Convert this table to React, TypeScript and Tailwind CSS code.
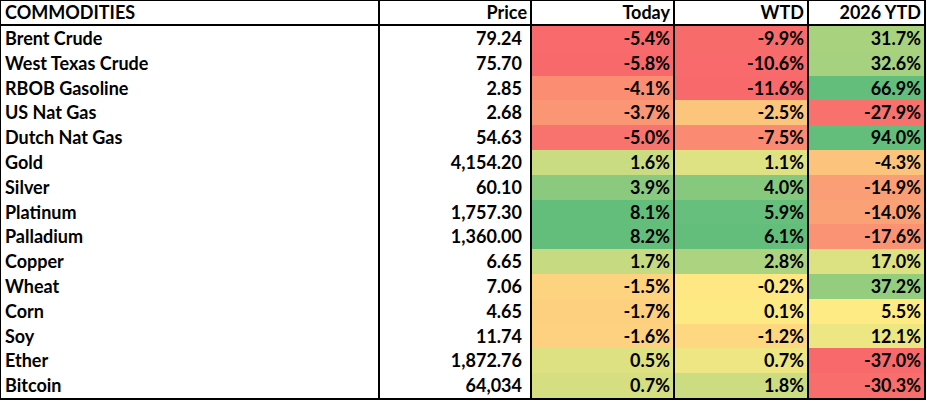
type Row = {
  name: string
  price: string
  today: [string, string]
  wtd: [string, string]
  ytd: [string, string]
}

const rows: Row[] = [
  { name: 'Brent Crude', price: '79.24', today: ['-5.4%', '#F86A6B'], wtd: ['-9.9%', '#F86B6B'], ytd: ['31.7%', '#A9D27F'] },
  { name: 'West Texas Crude', price: '75.70', today: ['-5.8%', '#F8696B'], wtd: ['-10.6%', '#F86A6B'], ytd: ['32.6%', '#A6D17F'] },
  { name: 'RBOB Gasoline', price: '2.85', today: ['-4.1%', '#FA8D72'], wtd: ['-11.6%', '#F8696B'], ytd: ['66.9%', '#63BE7B'] },
  { name: 'US Nat Gas', price: '2.68', today: ['-3.7%', '#FA9673'], wtd: ['-2.5%', '#FCC57C'], ytd: ['-27.9%', '#F8716C'] },
  { name: 'Dutch Nat Gas', price: '54.63', today: ['-5.0%', '#F8736D'], wtd: ['-7.5%', '#FA8A71'], ytd: ['94.0%', '#63BE7B'] },
  { name: 'Gold', price: '4,154.20', today: ['1.6%', '#CADC81'], wtd: ['1.1%', '#DFE283'], ytd: ['-4.3%', '#FCC37C'] },
  { name: 'Silver', price: '60.10', today: ['3.9%', '#8BC97E'], wtd: ['4.0%', '#86C87D'], ytd: ['-14.9%', '#FA9E75'] },
  { name: 'Platinum', price: '1,757.30', today: ['8.1%', '#63BE7B'], wtd: ['5.9%', '#66BF7C'], ytd: ['-14.0%', '#FAA276'] },
  { name: 'Palladium', price: '1,360.00', today: ['8.2%', '#63BE7B'], wtd: ['6.1%', '#63BE7B'], ytd: ['-17.6%', '#FA9373'] },
  { name: 'Copper', price: '6.65', today: ['1.7%', '#C6DB81'], wtd: ['2.8%', '#ACD380'], ytd: ['17.0%', '#DCE182'] },
  { name: 'Wheat', price: '7.06', today: ['-1.5%', '#FDD37F'], wtd: ['-0.2%', '#FFE884'], ytd: ['37.2%', '#95CD7E'] },
  { name: 'Corn', price: '4.65', today: ['-1.7%', '#FDD07F'], wtd: ['0.1%', '#FEEA83'], ytd: ['5.5%', '#FFEB84'] },
  { name: 'Soy', price: '11.74', today: ['-1.6%', '#FDD17F'], wtd: ['-1.2%', '#FDD880'], ytd: ['12.1%', '#ECE683'] },
  { name: 'Ether', price: '1,872.76', today: ['0.5%', '#DEE182'], wtd: ['0.7%', '#EDE683'], ytd: ['-37.0%', '#F8696B'] },
  { name: 'Bitcoin', price: '64,034', today: ['0.7%', '#D5DF82'], wtd: ['1.8%', '#CCDC81'], ytd: ['-30.3%', '#F86E6C'] },
]

const cols = 'grid grid-cols-[379px_152px_143px_134px_117px]'

function PctCell({ cell }: { cell: [string, string] }) {
  return (
    <div className="border-r-2 border-black pr-[3px] pt-[1px] text-right" style={{ backgroundColor: cell[1] }}>
      {cell[0]}
    </div>
  )
}

export default function App() {
  return (
    <div className="w-[927px] h-[403px] bg-white font-['Lato',sans-serif] text-[18px] font-bold text-black">
      <div className="w-[926px] border-l border-t border-b-2 border-black">
        {/* Header */}
        <div className={`${cols} h-[25px] leading-[23px] border-b-2 border-black`}>
          <div className="border-r-2 border-black pl-1">COMMODITIES</div>
          <div className="border-r-2 border-black pr-[3px] text-right">Price</div>
          <div className="border-r-2 border-black pr-[3px] text-right">Today</div>
          <div className="border-r-2 border-black pr-[3px] text-right">WTD</div>
          <div className="border-r-2 border-black pr-[3px] text-right">2026 YTD</div>
        </div>

        {/* Data rows */}
        {rows.map((r) => (
          <div key={r.name} className={`${cols} h-[24.8px] leading-[23.8px]`}>
            <div className="border-r-2 border-black pl-1 pt-[1px]">{r.name}</div>
            <div className="border-r-2 border-black pr-2 pt-[1px] text-right">{r.price}</div>
            <PctCell cell={r.today} />
            <PctCell cell={r.wtd} />
            <PctCell cell={r.ytd} />
          </div>
        ))}
      </div>
    </div>
  )
}
